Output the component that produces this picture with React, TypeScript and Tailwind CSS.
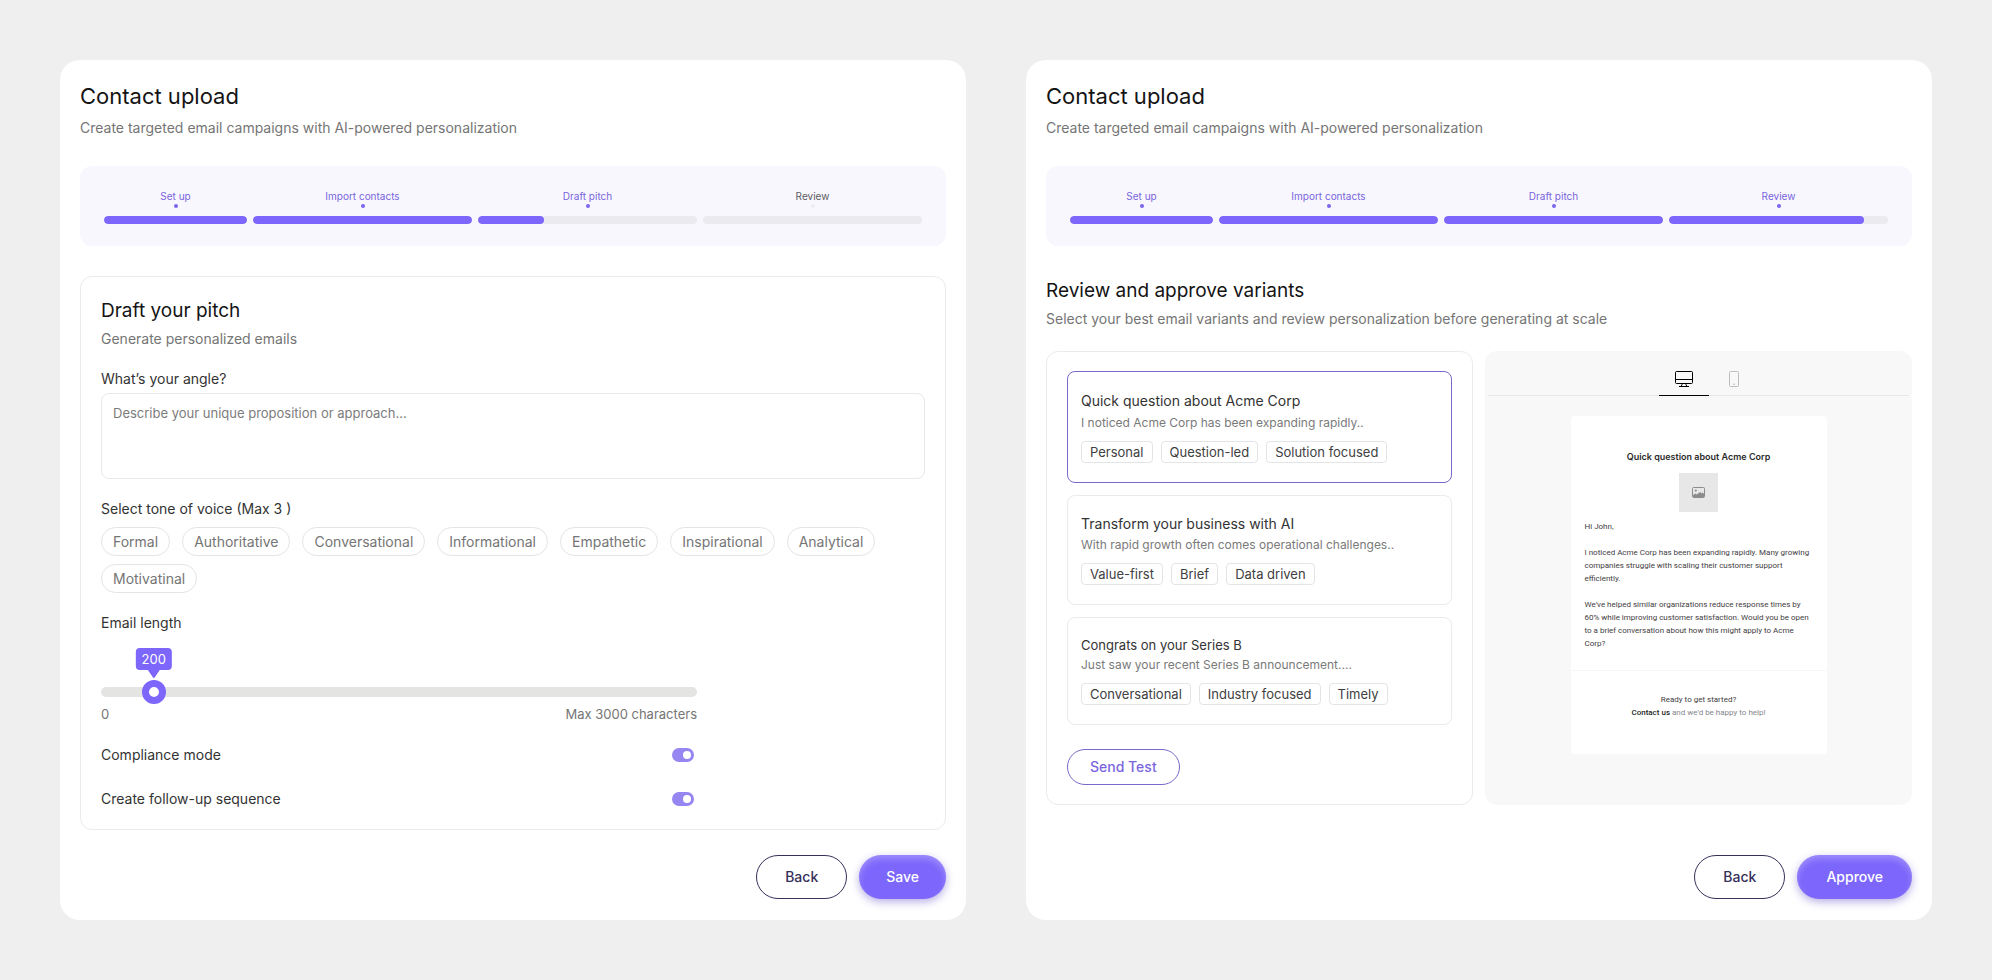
import React, { useState } from 'react';
import clsx from 'clsx';

interface Step {
    label: string;
    progress: number;
}

interface Variant {
    title: string;
    titleClass: string;
    excerpt: string;
    tags: string[];
}

const stepLabels = ['Set up', 'Import contacts', 'Draft pitch', 'Review'];

const tones = [
    'Formal',
    'Authoritative',
    'Conversational',
    'Informational',
    'Empathetic',
    'Inspirational',
    'Analytical',
    'Motivatinal',
];

const variants: Variant[] = [
    {
        title: 'Quick question about Acme Corp',
        titleClass: 'text-sm leading-6',
        excerpt: 'I noticed Acme Corp has been expanding rapidly..',
        tags: ['Personal', 'Question-led', 'Solution focused'],
    },
    {
        title: 'Transform your business with AI',
        titleClass: 'text-sm leading-[22px]',
        excerpt: 'With rapid growth often comes operational challenges..',
        tags: ['Value-first', 'Brief', 'Data driven'],
    },
    {
        title: 'Congrats on your Series B',
        titleClass: 'text-[13px] leading-5',
        excerpt: 'Just saw your recent Series B announcement....',
        tags: ['Conversational', 'Industry focused', 'Timely'],
    },
];

const Stepper: React.FC<{ progress: number[] }> = ({ progress }) => {
    const steps: Step[] = stepLabels.map((label, i) => ({ label, progress: progress[i] }));

    return (
        <ol className="mt-[26px] grid grid-cols-[143fr_219fr_219fr_219fr] gap-1.5 rounded-xl bg-[#f8f7fe] px-6 py-[22px]">
            {steps.map(step => (
                <li key={step.label} className="flex flex-col items-center">
                    <span
                        className={clsx(
                            'text-[10px] leading-4',
                            step.progress > 0 ? 'text-[#7965dd]' : 'text-[#5c5c60]'
                        )}
                    >
                        {step.label}
                    </span>
                    <span
                        className={clsx('size-1 rounded-full', step.progress > 0 ? 'bg-[#7b65ec]' : 'bg-[#ececf1]')}
                    />
                    <span className="mt-2 h-2 w-full overflow-hidden rounded-full bg-[#ebebef]">
                        <span
                            className="block h-full rounded-full bg-[#7c66fb]"
                            style={{ width: `${step.progress}%` }}
                        />
                    </span>
                </li>
            ))}
        </ol>
    );
};

const PanelHeader = () => (
    <header>
        <h1 className="text-[22px] leading-8 text-[#141414]">Contact upload</h1>
        <p className="mt-1 text-sm leading-6 text-[#757575]">
            Create targeted email campaigns with AI-powered personalization
        </p>
    </header>
);

const PanelFooter: React.FC<{ action: string; actionClass: string }> = ({ action, actionClass }) => (
    <footer className="mt-auto flex justify-end gap-3 pt-6">
        <button
            type="button"
            className="h-11 rounded-full border border-[#36305a] px-7 text-sm font-medium text-[#36305a]"
        >
            Back
        </button>
        <button
            type="button"
            className={clsx(
                'h-11 rounded-full bg-[#7c66fb] text-sm font-medium text-white shadow-[0_3px_8px_rgba(96,76,200,0.45),inset_0_4px_6px_rgba(255,255,255,0.25)]',
                actionClass
            )}
        >
            {action}
        </button>
    </footer>
);

const Toggle: React.FC<{ id: string; label: string }> = ({ id, label }) => {
    const [on, setOn] = useState(true);

    return (
        <div className="flex items-center justify-between pr-[3px]">
            <label htmlFor={id} className="text-sm leading-6 text-[#333]">
                {label}
            </label>
            <input
                id={id}
                type="checkbox"
                role="switch"
                checked={on}
                onChange={e => setOn(e.target.checked)}
                className="flex h-3.5 w-[22px] appearance-none items-center rounded-full bg-gray-300 px-[3px] before:size-2 before:rounded-full before:bg-white checked:justify-end checked:bg-[#9586f2]"
            />
        </div>
    );
};

const LengthSlider = () => {
    const [length, setLength] = useState(200);
    const ratio = length / 3000;

    return (
        <div>
            <label htmlFor="email-length" className="block text-sm leading-6 text-[#333]">
                Email length
            </label>
            <div className="relative mt-[45px] flex h-6 items-center px-[3px]">
                <div className="absolute inset-x-0 h-2.5 rounded-full bg-[#e4e4e2]" />
                <input
                    id="email-length"
                    type="range"
                    min={0}
                    max={3000}
                    value={length}
                    onChange={e => setLength(Number(e.target.value))}
                    className="relative h-6 w-full appearance-none bg-transparent [&::-webkit-slider-thumb]:size-6 [&::-webkit-slider-thumb]:appearance-none [&::-webkit-slider-thumb]:rounded-full [&::-webkit-slider-thumb]:border-[7px] [&::-webkit-slider-thumb]:border-solid [&::-webkit-slider-thumb]:border-[#7c66fb] [&::-webkit-slider-thumb]:bg-white"
                />
                <output
                    htmlFor="email-length"
                    className="absolute bottom-full mb-0.5 flex -translate-x-1/2 flex-col items-center"
                    style={{ left: `calc(15px + (100% - 30px) * ${ratio})` }}
                >
                    <span className="rounded bg-[#7c66fb] px-1.5 text-[13px] leading-[22px] text-white">{length}</span>
                    <svg width="12" height="8" viewBox="0 0 12 8" fill="#7c66fb">
                        <path d="M0 0h12L7 7.2a1.2 1.2 0 0 1-2 0z" />
                    </svg>
                </output>
            </div>
            <div className="flex justify-between text-[13px] leading-5 text-[#757575]">
                <span>0</span>
                <span>Max 3000 characters</span>
            </div>
        </div>
    );
};

const DraftPanel = () => {
    const [selected, setSelected] = useState<string[]>([]);

    const toggleTone = (tone: string) => {
        setSelected(prev => {
            if (prev.includes(tone)) return prev.filter(t => t !== tone);
            return prev.length < 3 ? [...prev, tone] : prev;
        });
    };

    return (
        <section className="flex flex-col rounded-[20px] bg-white px-5 pt-5 pb-[21px]">
            <PanelHeader />
            <Stepper progress={[100, 100, 30, 0]} />

            <div className="mt-[30px] rounded-xl border border-[#e9ebec] px-5 pt-5 pb-[18px]">
                <h2 className="text-[19px] leading-7 text-[#141414]">Draft your pitch</h2>
                <p className="mt-0.5 text-sm leading-6 text-[#757575]">Generate personalized emails</p>

                <label htmlFor="angle" className="mt-4 block text-sm leading-6 text-[#333]">
                    What’s your angle?
                </label>
                <textarea
                    id="angle"
                    placeholder="Describe your unique proposition or approach..."
                    className="mt-0.5 block h-[86px] w-full resize-none rounded-lg border border-[#e6e8e9] px-[11px] py-[9px] text-[13px] leading-5 placeholder:text-[#7c7c7c]"
                />

                <h3 className="mt-[18px] text-sm leading-6 text-[#333]">Select tone of voice (Max 3 )</h3>
                <div className="mt-1.5 flex flex-wrap gap-x-3 gap-y-2">
                    {tones.map(tone => (
                        <button
                            key={tone}
                            type="button"
                            aria-pressed={selected.includes(tone)}
                            onClick={() => toggleTone(tone)}
                            className={clsx(
                                'h-[29px] rounded-full border px-[11px] text-sm',
                                selected.includes(tone)
                                    ? 'border-[#7b66d8] text-[#7b66d8]'
                                    : 'border-[#e2e4e5] text-[#757575]'
                            )}
                        >
                            {tone}
                        </button>
                    ))}
                </div>

                <div className="mt-[18px] max-w-[596px]">
                    <LengthSlider />
                    <div className="mt-[19px] flex flex-col gap-5">
                        <Toggle id="compliance" label="Compliance mode" />
                        <Toggle id="follow-up" label="Create follow-up sequence" />
                    </div>
                </div>
            </div>

            <PanelFooter action="Save" actionClass="px-[27px]" />
        </section>
    );
};

const MonitorIcon = () => (
    <svg width="18" height="16" viewBox="0 0 18 16" fill="none" stroke="currentColor">
        <rect x="0.5" y="0.5" width="17" height="12" rx="1" />
        <path d="M0.5 8.5h17M4 15.5h10M7 12.5v1.2l-1 1.8M11 12.5v1.2l1 1.8" />
    </svg>
);

const PhoneIcon = () => (
    <svg width="10" height="16" viewBox="0 0 10 16" fill="none" stroke="currentColor">
        <rect x="0.5" y="0.5" width="9" height="15" rx="1" />
        <path d="M4 13.2h2" />
    </svg>
);

const ImageIcon = () => (
    <svg width="13" height="11" viewBox="0 0 13 11" fill="none">
        <rect x="0.5" y="0.5" width="12" height="10" rx="1" stroke="#8c8c8c" />
        <circle cx="3.8" cy="3.6" r="1.1" fill="#8c8c8c" />
        <path d="M1 10V8.2l2-1.6 1.6 1L8.2 5l1.4 1.4 1-.8L12 6.8V10z" fill="#8c8c8c" />
    </svg>
);

const EmailPreview = () => (
    <div className="rounded-xl bg-[#f8f8f8] pb-5">
        <div className="mx-[3px] flex h-[45px] justify-center gap-5 border-b border-[#e6e6e6]">
            <button
                type="button"
                aria-label="Desktop preview"
                className="-mb-px flex border-b border-black px-4 pt-5 text-black"
            >
                <MonitorIcon />
            </button>
            <button type="button" aria-label="Mobile preview" className="flex pt-5 text-[#bdbdbd]">
                <PhoneIcon />
            </button>
        </div>

        <article className="mx-auto mt-5 max-w-64 rounded bg-white font-[Roboto,sans-serif] text-[8px] leading-[13px] text-[#3f4043]">
            <div className="px-3.5 pt-[33px] pb-5">
                <h3 className="text-center font-['Inter',sans-serif] text-[9px] leading-4 font-semibold text-[#2b2b2b]">
                    Quick question about Acme Corp
                </h3>
                <div className="mx-auto mt-2 flex size-[39px] items-center justify-center bg-[#e7e7e7]">
                    <ImageIcon />
                </div>
                <p className="mt-2">Hi John,</p>
                <p className="mt-[13px]">
                    I noticed Acme Corp has been expanding rapidly. Many growing companies struggle with scaling their
                    customer support efficiently.
                </p>
                <p className="mt-[13px]">
                    We've helped similar organizations reduce response times by 60% while improving customer
                    satisfaction. Would you be open to a brief conversation about how this might apply to Acme Corp?
                </p>
            </div>
            <div className="border-t border-[#f6f6f6] pt-[22px] pb-[35px] text-center">
                <p>Ready to get started?</p>
                <p className="text-[#85878c]">
                    <a href="#contact" className="font-medium text-[#1f1f1f]">
                        Contact us
                    </a>{' '}
                    and we'd be happy to help!
                </p>
            </div>
        </article>
    </div>
);

const ReviewPanel = () => {
    const [active, setActive] = useState(0);

    return (
        <section className="flex flex-col rounded-[20px] bg-white px-5 pt-5 pb-[21px]">
            <PanelHeader />
            <Stepper progress={[100, 100, 100, 89]} />

            <h2 className="mt-[31px] text-[19px] leading-7 text-[#141414]">Review and approve variants</h2>
            <p className="mt-0.5 text-sm leading-6 text-[#757575]">
                Select your best email variants and review personalization before generating at scale
            </p>

            <div className="mt-5 grid grid-cols-2 gap-3">
                <div className="rounded-xl border border-[#e9ebec] px-5 py-[19px]">
                    <div className="flex flex-col gap-3">
                        {variants.map((variant, i) => (
                            <button
                                key={variant.title}
                                type="button"
                                aria-pressed={active === i}
                                onClick={() => setActive(i)}
                                className={clsx(
                                    'rounded-lg border px-[13px] pt-[17px] pb-[19px] text-left',
                                    active === i ? 'border-[#7b66c9]' : 'border-[#e9ebec]'
                                )}
                            >
                                <span className={clsx('block text-[#333]', variant.titleClass)}>{variant.title}</span>
                                <span className="block text-xs leading-5 text-[#7a7a7a]">{variant.excerpt}</span>
                                <span className="mt-2 flex flex-wrap gap-2">
                                    {variant.tags.map(tag => (
                                        <span
                                            key={tag}
                                            className="rounded border border-[#e2e4e5] px-2 text-[13px] leading-5 text-[#404040]"
                                        >
                                            {tag}
                                        </span>
                                    ))}
                                </span>
                            </button>
                        ))}
                    </div>
                    <button
                        type="button"
                        className="mt-6 h-9 rounded-full border border-[#7b66c9] px-[22px] text-sm font-medium text-[#7b66e0]"
                    >
                        Send Test
                    </button>
                </div>

                <EmailPreview />
            </div>

            <PanelFooter action="Approve" actionClass="px-[29px]" />
        </section>
    );
};

const App: React.FC = () => {
    return (
        <main className="grid min-h-screen grid-cols-2 gap-[60px] bg-[#efefef] p-[60px] font-['Inter',sans-serif]">
            <DraftPanel />
            <ReviewPanel />
        </main>
    );
};

export default App;
